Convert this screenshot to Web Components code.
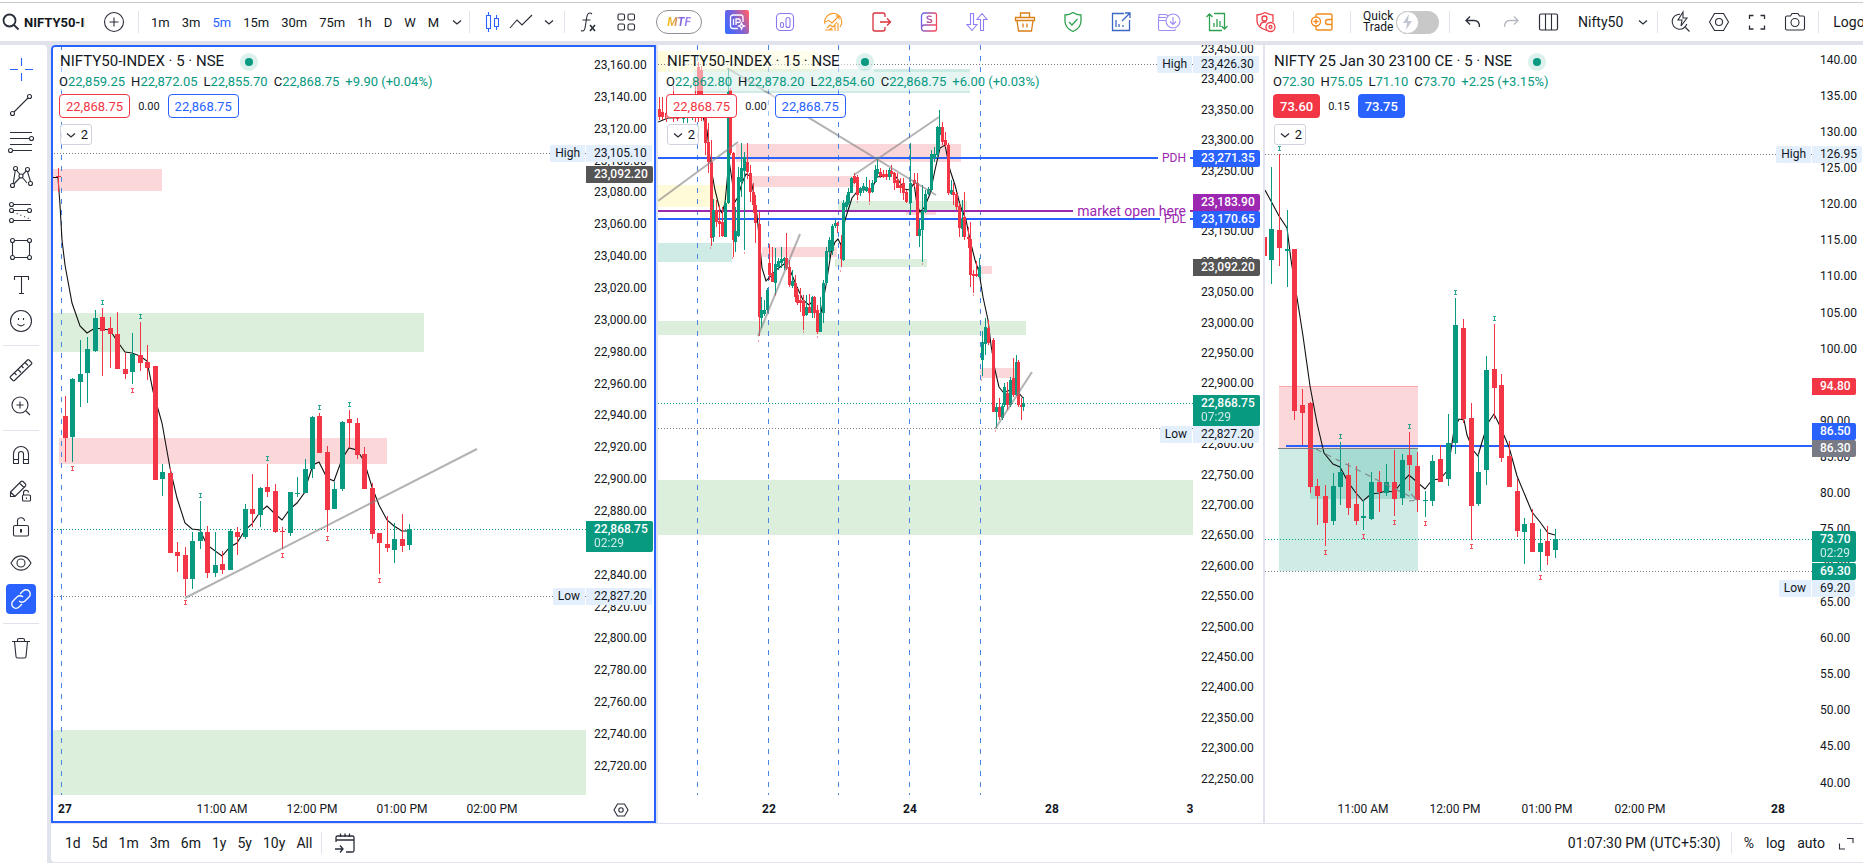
<!DOCTYPE html>
<html lang="en">
<head>
<meta charset="utf-8">
<title>NIFTY50-INDEX charts</title>
<style>
html,body{margin:0;height:100%}
body{font-family:Roboto,"Liberation Sans",sans-serif;font-size:13px;color:#131722;background:#e0e3eb;overflow:hidden}
</style>
</head>
<body>
<chart-app></chart-app>
<script>
/* Shared element base: every element renders its own open shadow root. */
class Base extends HTMLElement{
  connectedCallback(){
    if(this.shadowRoot)return;
    const t=document.createElement('template');
    t.innerHTML='<style>*{box-sizing:border-box}button{font:inherit;color:inherit;background:none;border:0;padding:0;margin:0;display:flex;align-items:center;justify-content:center;white-space:nowrap;flex:none}'+this.css()+'</style>'+this.html();
    this.attachShadow({mode:'open'}).appendChild(t.content.cloneNode(true));
  }
  css(){return ''} html(){return ''}
}

const ICONS={
search:'<circle cx="12.5" cy="12.5" r="6" stroke-width="1.8"/><path d="M17 17l4.5 4.5" stroke-width="1.8"/>',
plus:'<circle cx="14" cy="14" r="9.5"/><path d="M14 9.500v9M9.500 14h9"/>',
chev:'<path d="M10 12.500l4 3.500 4-3.500" stroke-width="1.3"/>',
candles:'<path d="M7.500 7.500h4v13h-4zM9.500 4v3.500M9.500 20.500V24M15.500 10.500h4v8h-4zM17.500 7v3.500M17.500 18.500V22"/>',
line:'<path d="M3 20l7-8 5 5 10-10"/>',
fx:'<path d="M18 6c-2-1.800-4.500-1-5 2l-2 12c-.500 3-2.500 3.500-4 2.500M8.500 12h8"/><path d="M16 17l5 6M21 17l-5 6" stroke-width="1.600"/>',
grid:'<rect x="6" y="6" width="6.500" height="6" rx="1.500"/><rect x="16" y="6" width="6.500" height="6" rx="1.500"/><rect x="6" y="16" width="6.500" height="6" rx="1.500"/><rect x="16" y="16" width="6.500" height="6" rx="1.500"/>',
brand:'<defs><linearGradient id="g" x1="0" y1=".7" x2="1" y2=".2"><stop offset="0" stop-color="#3f6bff"/><stop offset=".5" stop-color="#7a62d8"/><stop offset="1" stop-color="#ff5f6d"/></linearGradient></defs><rect x="2" y="2" width="24" height="24" rx="2" fill="url(#g)" stroke="none"/><g stroke="#fff" stroke-width="1.300"><path d="M20 14V9.500A2.500 2.500 0 0 0 17.500 7H10a2.500 2.500 0 0 0-2.500 2.500V18a2.500 2.500 0 0 0 2.500 2.500h5"/><path d="M10.500 11v6M13 17v-6h2.500a1.500 1.500 0 0 1 0 3.500H13M18.500 15l.800 2 2.200 1-2.200 1-.800 2-.800-2-2.200-1 2.200-1z"/></g>',
bars:'<g stroke="#8b75f0"><rect x="5.500" y="5.500" width="17" height="17" rx="4"/><rect x="9.500" y="14.500" width="3" height="5" rx="1.500"/><rect x="15" y="9.500" width="4" height="10" rx="2"/></g>',
growth:'<g stroke="#f79a28"><path d="M6 16a8.500 8.500 0 1 1 15 3M5 14l5-1.500 3 2.500 7-7M16.500 8H20v3.500M8 20l3-3 3 2 4-5M6 22h8M16 23v-6M19 23v-8M10 22l3-2"/></g>',
exit:'<g stroke="#d8323c" stroke-width="1.300"><path d="M18 9V7a2 2 0 0 0-2-2H8a2 2 0 0 0-2 2v14a2 2 0 0 0 2 2h8a2 2 0 0 0 2-2v-2M13 14h10M20 10.500l3.500 3.500-3.500 3.500"/></g>',
sdoc:'<defs><linearGradient id="s" x1="0" y1="0" x2="1" y2=".3"><stop offset="0" stop-color="#5b63f5"/><stop offset="1" stop-color="#f0485f"/></linearGradient></defs><g stroke="url(#s)" stroke-width="1.300"><path d="M6.500 20V8A3 3 0 0 1 9.500 5h10a2 2 0 0 1 2 2v14a2 2 0 0 1-2 2h-10a3 3 0 0 1 0-6h12M16.500 8.800c-1.500-1.200-4.500-.8-4.500 .9 0 2.200 4.800 1 4.800 3.200 0 1.800-3.200 2-5 .7"/></g>',
updown:'<g stroke="#8f80f2"><path d="M7.500 5.500v11H4l5 6 5-6h-3.500v-11zM17.500 22.500v-11H14l5-6 5 6h-3.500v11z"/></g>',
basket:'<g stroke="#d97f14" stroke-width="1.300"><path d="M4.500 9.500h19v3h-19zM6 12.500l1.500 10.500h13l1.500-10.500M9.500 9.500V5h9v4.500M12 15.500v4M16 15.500v4"/></g>',
shield:'<path d="M14 4.500c2.500 1.800 5 2.500 8 2.500v6c0 5-3.500 8.500-8 10.500-4.500-2-8-5.500-8-10.500V7c3 0 5.500-.7 8-2.500zM10 14l3 3 5.500-6" stroke="#2fa14f" stroke-width="1.300"/>',
expchart:'<g stroke="#3c67c5" stroke-width="1.300"><path d="M17 5.500H5.500v17h17V12M15 13l8-8M18 5h5v5M9 12v7M12 16v3M16 17v2"/></g>',
folder:'<g stroke="#9c8cf5"><path d="M11 9.500H3.500V21A1.500 1.500 0 0 0 5 22.500h14a1.500 1.500 0 0 0 1.500-1.500M3.500 12.500h7.500M4 9.500v-3h7l2 1.500"/><circle cx="18" cy="13" r="7"/><path d="M18 9v7.500M15 13.500l3 3 3-3"/></g>',
gsync:'<g stroke="#2fa14f" stroke-width="1.300"><path d="M6.500 7v15.500H19M3.500 9l3-3 3 3M11 5.500h10.500V20M18.500 18l3 3 3-3M11 19v-4M14 19v-8M17 19v-6"/></g>',
rshield:'<g stroke="#ec3f48" stroke-width="1.300"><path d="M16 22.500c-7-2-10-5-10-9.500V7c3 0 5-1 8-2.500 3 1.500 5 2.500 8 2.500v7"/><circle cx="13.500" cy="10.500" r="2.500"/><path d="M9.500 18c0-3 2-4 4-4h2"/><circle cx="19.500" cy="19" r="4.500"/><circle cx="19.500" cy="19" r="1.500"/></g>',
wallet:'<g stroke="#f08c1e" stroke-width="1.400"><path d="M8 9V7.500A1.500 1.500 0 0 1 9.500 6h13a1.500 1.500 0 0 1 1.500 1.500v13a1.500 1.500 0 0 1-1.500 1.500h-13A1.500 1.500 0 0 1 8 20.500V18M24 11.500h-4a2.500 2.500 0 0 0 0 5h4"/><circle cx="8" cy="13.500" r="4.500"/><path d="M8 11v5M5.500 13.500h5"/></g>',
bolt:'<path d="M15 6l-6 9h4l-1 7 6-9h-4z" fill="#c3c7d2" stroke="none"/>',
undo:'<path d="M11 8.500l-4 4 4 4M7 12.500h8c3.500 0 5.500 2.500 5.500 6.500" stroke-width="1.300"/>',
redo:'<path d="M17 8.500l4 4-4 4M21 12.500h-8c-3.500 0-5.500 2.500-5.500 6.500" stroke="#b6b9c1" stroke-width="1.300"/>',
layout:'<rect x="4.500" y="6" width="18" height="16" rx="1.500" stroke-width="1.200"/><path d="M10.500 6v16M16.500 6v16"/>',
boltlens:'<path d="M13 6.200A7.500 7.500 0 1 0 19.800 16M18.500 19.500l4 4M16 4l-5 8h4l-1 6 6-8h-4z"/>',
hex:'<path d="M9.500 5.500h9l5 8.500-5 8.500h-9L4.500 14z"/><circle cx="14" cy="14" r="3.500"/>',
full:'<path d="M6.500 11V7.500h4M17.500 7.500h4V11M21.500 17.500V21h-4M10.500 21h-4v-3.500" stroke-width="1.300"/>',
camera:'<path d="M4.500 9.500a1.500 1.500 0 0 1 1.500-1.500h3.500l1.500-2.500h6L18.500 8H22a1.500 1.500 0 0 1 1.500 1.500v11A1.500 1.500 0 0 1 22 22H6a1.500 1.500 0 0 1-1.500-1.500z"/><circle cx="14" cy="14.500" r="4"/>',
cross:'<path d="M14.500 3v8M14.500 18v8M3 14.500h8M18 14.500h8" stroke="#2962ff"/>',
trend:'<circle cx="5.500" cy="22.500" r="2"/><circle cx="22.500" cy="5.500" r="2"/><path d="M7 21L21 7"/>',
fib:'<path d="M3 5.500h22M3 11.500h20M3 17.500h22M6 23.500h19"/><circle cx="24.500" cy="11.500" r="2" fill="#fff"/><circle cx="3.500" cy="23.500" r="2" fill="#fff"/>',
pattern:'<path d="M6 22l2.500-16L20 20M6 22L20 7l4 13"/><g fill="#fff"><circle cx="5.500" cy="22.500" r="2"/><circle cx="8.500" cy="5.500" r="2"/><circle cx="14" cy="13" r="2"/><circle cx="20.500" cy="6.500" r="2"/><circle cx="23.500" cy="20.500" r="2"/></g>',
fork:'<path d="M5 5.500h19M5 11.500h17M5 21.500h19"/><path d="M6 13l17 7" stroke-dasharray="1 3"/><g fill="#fff"><circle cx="4.500" cy="5.500" r="2"/><circle cx="4.500" cy="11.500" r="2"/><circle cx="22.500" cy="11.500" r="2"/><circle cx="4.500" cy="21.500" r="2"/></g>',
rect:'<path d="M5.500 5.500h17v17h-17z"/><g fill="#fff"><circle cx="5.500" cy="5.500" r="2"/><circle cx="22.500" cy="5.500" r="2"/><circle cx="5.500" cy="22.500" r="2"/><circle cx="22.500" cy="22.500" r="2"/></g>',
text:'<path d="M7.500 9V5.500h14V9M14.500 5.500v17M12 22.500h5"/>',
smile:'<circle cx="14" cy="14" r="10.500"/><path d="M11.500 11v2M16.500 11v2M10.500 17c2 2.500 5 2.500 7 0"/>',
ruler:'<path d="M3.500 20.500l17-16.500a1 1 0 0 1 1.500 0l2.500 2.500a1 1 0 0 1 0 1.500l-17 16.500a1 1 0 0 1-1.500 0L3.500 22a1 1 0 0 1 0-1.500zM7.500 17l2 2M11 13.500l3 3M14.500 10l2 2M18 6.500l3 3"/>',
zoom:'<circle cx="13" cy="13" r="8"/><path d="M13 9.500v7M9.500 13h7M19 19l4 4"/>',
magnet:'<path d="M6.500 22.500V13a7.500 7.500 0 0 1 15 0v9.500h-5V13a2.500 2.500 0 0 0-5 0v9.500zM6.500 18.500h5M16.500 18.500h5"/>',
pencil:'<path d="M3.500 15L14 4.500a1.500 1.500 0 0 1 2 0L18.500 7a1.500 1.500 0 0 1 0 2L8 19.500H3.500zM12.500 6l4.500 4.500M3.500 15l4.500 4.500"/><rect x="15.500" y="18" width="8" height="6" rx="1" fill="#fff"/><path d="M16.500 18v-2a2.500 2.500 0 0 1 5-.5M19.500 20.500v1.500"/>',
lock:'<rect x="6.500" y="12.500" width="15" height="10.500" rx="1.500"/><path d="M10.500 12.500V8.500a3.500 3.500 0 0 1 7-.5" /><path d="M14 16v3.500" stroke-width="2"/>',
eye:'<path d="M4 14c5-9.500 15-9.500 20 0-5 9.500-15 9.500-20 0z"/><circle cx="14" cy="14" r="4"/>',
link:'<g stroke="#fff" stroke-width="1.300"><path d="M13 9l3-3a4.200 4.200 0 0 1 6 6l-4 4a4.200 4.200 0 0 1-6 0M15 19l-3 3a4.200 4.200 0 0 1-6-6l4-4a4.200 4.200 0 0 1 6 0"/></g>',
trash:'<path d="M5 7.500h18M7.500 7.500l1.500 15a1.500 1.500 0 0 0 1.500 1.500h7a1.500 1.500 0 0 0 1.500-1.500l1.500-15M10.500 7.500V6A1.500 1.500 0 0 1 12 4.500h4A1.500 1.500 0 0 1 17.500 6v1.500"/>',
cal:'<path d="M5 13V8.500A1.500 1.500 0 0 1 6.500 7h15A1.500 1.500 0 0 1 23 8.500v13a1.500 1.500 0 0 1-1.500 1.500H15M5 11h18M9.500 4.500V8M14 4.500V8M18.500 4.500V8M4 20h8M9 16.500l3 3.500-3 3.500" stroke-width="1.300"/>',
minihex:'<path d="M10.500 8h7l3.500 6-3.500 6h-7l-3.500-6z"/><circle cx="14" cy="14" r="2.200"/>',
maxi:'<path d="M15 9.500h6V14M7.500 14.500V20H13"/>'
};
class ChartIcon extends Base{
  css(){return ':host{display:block;width:28px;height:28px;flex:none}svg{display:block}'}
  html(){return `<svg width="28" height="28" viewBox="0 0 28 28" fill="none" stroke="${this.getAttribute('color')||'#2a2e39'}" stroke-width="1.1" aria-hidden="true">${ICONS[this.getAttribute('name')]}</svg>`}
}
customElements.define('chart-icon',ChartIcon);
const ic=(n,c)=>`<chart-icon name="${n}"${c?` color="${c}"`:''}></chart-icon>`;
const btn=(n,cls='',label=n)=>`<button class="${cls}" aria-label="${label}">${ic(n)}</button>`;

class TopBar extends Base{
  css(){return `:host{display:flex;align-items:center;height:41px;background:#fff;box-shadow:inset 0 2px #fff,inset 0 3px #c9cacd;padding-top:3px;overflow:hidden;flex:none}
  .g{display:flex;align-items:center;flex:none}
  .sep{width:1px;height:22px;background:#e0e3eb;flex:none}
  .sym{font-size:13px;font-weight:700;width:85px;justify-content:flex-start;overflow:hidden}
  .sym chart-icon{margin:0 -1px 0 -3px}
  .w28{width:28px}.w24{width:24px}.w38{width:38px}.w48{width:48px}.w46{width:46px}.w30{width:30px}.w56{width:56px}
  .add{margin:0 10px 0 15px}
  .iv{gap:12px;padding:0 6px 0 12px;font-size:13px}
  .on{color:#2962ff}
  .ty{padding:0 1px 0 9px}.st{padding:0 4px}
  .mtf{width:46px;height:24px;border:1px solid #8d8f96;border-radius:12px;margin:0 11px;font-size:12px;font-weight:700;font-style:italic}
  .mtf span{background:linear-gradient(90deg,#f5c518,#e0a050 35%,#7b62e8 60%,#b79bf0);-webkit-background-clip:text;color:transparent}
  .qt{padding:0 10px 0 12px;gap:5px}
  .qt label{display:flex;align-items:center;gap:5px;font-size:12px;line-height:11px}
  .qt span{width:28px}
  .sw{position:relative;width:43px;height:23px}
  input{appearance:none;margin:0;display:block;width:43px;height:23px;border-radius:12px;background:#c8c8c8}
  .knob{position:absolute;left:0;top:0;width:23px;height:23px;border-radius:50%;background:#fff;border:1px solid #c8c8c8;display:flex;align-items:center;justify-content:center;pointer-events:none}
  .lay{padding-left:6px;font-size:13px}.lay chart-icon{margin-left:6px}
  .lay{font-size:14px}.out{padding-left:14px;font-size:14px}`}
  html(){
    const iv=['1m','3m','5m','15m','30m','75m','1h','D','W','M'].map(t=>`<button${t==='5m'?' class="on"':''}>${t}</button>`).join('');
    const tools=['brand','bars','growth','exit','sdoc','updown','basket','shield','expchart','folder','gsync','rshield'].map(n=>btn(n,'w48')).join('');
    const sep='<i class="sep"></i>';
    return `<button class="sym">${ic('search')}NIFTY50-INDEX</button>${btn('plus','w28 add')}${sep}
    <div class="g iv">${iv}</div>${btn('chev','w24')}${sep}
    <div class="g ty"><button class="w28" aria-label="candles">${ic('candles','#2962ff')}</button>${btn('line','w28')}${btn('chev','w28')}</div>${sep}
    <div class="g st">${btn('fx','w38')}${btn('grid','w38')}<button class="mtf"><span>MTF</span></button>${tools}</div>${sep}
    ${btn('wallet','w56')}${sep}
    <div class="g qt"><label for="qt"><span>Quick Trade</span></label><div class="sw"><input type="checkbox" id="qt"><div class="knob">${ic('bolt')}</div></div></div>${sep}
    <div class="g">${btn('undo','w46')}${btn('redo','w30')}${btn('layout','w46')}<button class="lay">Nifty50${ic('chev')}</button></div>${sep}
    <div class="g st">${btn('boltlens','w38')}${btn('hex','w38')}${btn('full','w38')}${btn('camera','w38')}</div>${sep}
    <button class="out">Logout</button>`}
}
customElements.define('top-bar',TopBar);

class ToolRail extends Base{
  css(){return `:host{display:flex;flex-direction:column;width:47px;background:#fff;border-radius:0 4px 0 0;padding-top:6px;flex:none}
  button{width:42px;height:36px}
  hr{width:36px;height:1px;background:#e0e3eb;border:0;margin:6px 0 6px 3px;flex:none}
  .on::before{content:"";position:absolute;width:30px;height:30px;border-radius:4px;background:#2962ff}
  .on chart-icon{position:relative}`}
  html(){return ['cross','trend','fib','pattern','fork','rect','text','smile',0,'ruler','zoom',0,'magnet','pencil','lock','eye','link',0,'trash'].map(n=>n?btn(n,n==='link'?'on':''):'<hr>').join('')}
}
customElements.define('tool-rail',ToolRail);

/* Candles: x, high, body top, body bottom, low, 1 = rising / 0 = falling. */
const R='#f23645',G='#089981',PINK='rgba(242,54,69,.2)',GREEN='rgba(76,175,80,.2)',TEAL='rgba(8,153,129,.2)',YEL='rgba(255,235,59,.2)';
const CHARTS={
a:{x0:51,scale:[23160,65,-20,31.86,22],fmt:1,body:5,
 title:'NIFTY50-INDEX · 5 · NSE',ohlc:['22,859.25','22,872.05','22,855.70','22,868.75','+9.90 (+0.04%)'],bid:'22,868.75',ask:'22,868.75',spread:'0.00',
 zones:[[51,169,111,22,PINK],[51,313,373,39,GREEN],[59,438,328,26,PINK],[51,730,2000,65,GREEN]],
 days:[61.5],dots:[[153.5,'#787b86'],[529.5,G],[596.5,'#787b86']],trends:[[185,598,477,449]],
 ma:'51,177.5 58,177.5 60,205 62,240 65,265 72,303 80,326 87,333 95,328 102,329 110,330 117,341 125,352 132,353 140,356 147,361 153,391 158,409 162,423 170,468 177,498 185,523 192,529 200,530 207,545 222,556 230,547 237,543 245,530 252,524 260,512 267,506 275,514 282,520 290,509 297,503 305,492 308,480 313,465 319,462 327,478 334,481 342,459 349,448 357,450 364,461 372,487 379,505 387,520 394,526 402,531 409,531',
 c:[[58,168,176,177,192,0],[65,396,416,438,462,0],[72,378,379,437,462,1],[80,340,374,382,407,1],[87,337,349,373,403,1],[95,310,318,351,352,1],[102,308,317,331,376,0],[110,317,328,334,368,0],[117,312,334,369,369,0],[125,353,369,374,379,0],[132,333,354,372,384,1],[140,322,355,363,371,0],[147,345,362,368,380,0],[155,366,366,480,480,0],[162,464,472,479,496,1],[170,468,473,553,553,0],[177,542,552,556,572,0],[185,547,555,579,596,0],[192,532,541,579,589,1],[200,501,532,541,549,1],[207,526,532,573,578,0],[215,532,565,573,577,1],[222,551,564,570,574,0],[230,529,531,570,570,1],[237,527,532,537,555,0],[245,504,509,537,539,1],[252,474,509,514,527,0],[260,487,488,515,527,1],[267,464,487,492,497,0],[275,484,491,532,533,0],[282,527,531,532,549,0],[290,492,492,533,536,1],[297,477,493,494,497,1],[305,459,469,493,493,1],[312,416,417,469,478,1],[319,413,416,453,453,0],[327,446,452,510,532,0],[334,482,489,509,509,1],[342,421,422,489,491,1],[349,410,419,423,448,0],[357,418,423,455,459,0],[364,447,454,489,489,0],[372,483,488,534,539,0],[379,533,533,543,574,0],[387,516,544,548,552,0],[394,523,539,550,563,1],[402,514,539,546,552,0],[409,524,529,545,550,1]],
 up:[[102,302],[140,316],[200,495],[267,458],[319,407],[349,404]],dn:[[72,468],[132,390],[185,602],[282,555],[327,538],[379,580]],
 tags:[[153,'23,105.10','soft','High'],[174,'23,092.20','dark'],[529,'22,868.75','teal','','02:29'],[596,'22,827.20','soft','Low']],
 times:[[65,'27',1],[222,'11:00 AM'],[312,'12:00 PM'],[402,'01:00 PM'],[492,'02:00 PM']]},
b:{x0:658,scale:[23450,49,-50,30.4,24],fmt:1,body:3,
 title:'NIFTY50-INDEX · 15 · NSE',ohlc:['22,862.80','22,878.20','22,854.60','22,868.75','+6.00 (+0.03%)'],bid:'22,868.75',ask:'22,868.75',spread:'0.00',
 zones:[[658,51,159,21,YEL],[694,69,276,24,TEAL],[736,144,225,18,PINK],[750,176,105,11,PINK],[658,185,72,22,YEL],[838,201,129,10,GREEN],[906,211,30,4,PINK],[658,243,74,19,TEAL],[762,247,75,10,PINK],[835,259,92,8,GREEN],[980,266,12,8,PINK],[658,321,368,14,GREEN],[980,368,40,10,PINK],[658,480,2000,55,GREEN]],
 days:[697.5,768.5,838.5,909.5,980.5],dots:[[64.5,'#787b86'],[403.5,G],[428.5,'#787b86']],
 levels:[[658,158,'#2962ff'],[658,211,'#9c27b0'],[658,219,'#2962ff']],
 trends:[[658,201,738,142],[727,68,936,195],[854,175,939,117],[758,336,800,234],[995,429,1032,372]],
 ma:'658,122 668,118 703,117 707,130 711,168 715,190 720,210 722,213 725,203 729,160 732,180 735,202 738,197 742,183 746,174 750,176 753,190 757,215 762,268 766,281 770,277 776,270 784,264 790,270 797,287 803,300 809,305 813,301 817,315 821,313 826,285 831,253 835,242 838,239 841,245 845,220 852,198 856,193 862,190 872,189 877,177 885,176 893,173 899,181 904,189 910,190 914,183 917,205 920,212 924,208 930,194 935,170 940,148 945,145 950,170 955,185 960,205 966,220 970,240 975,260 979,272 983,297 988,320 991,345 995,370 999,387 1003,392 1008,391 1013,388 1018,392 1023,398',
 c:[[659,97,109,117,120,0],[662,97,112,117,120,0],[666,110,113,118,122,0],[673,86,111,116,122,0],[677,105,113,119,121,0],[683,108,115,119,123,1],[687,110,114,118,123,1],[692,112,115,118,120,1],[695,80,112,118,122,0],[698,62,67,118,122,0],[701,66,70,118,121,0],[705,107,115,143,155,0],[708,123,142,162,173,0],[711,140,162,238,246,0],[713,199,210,237,242,1],[716,200,210,222,227,0],[719,205,221,224,237,0],[722,207,222,236,237,0],[725,200,203,237,237,1],[728,68,92,203,204,1],[730,88,90,153,155,0],[733,152,153,240,257,0],[735,207,231,242,252,1],[738,167,177,236,237,1],[741,143,168,182,197,1],[744,152,157,171,250,1],[747,143,162,172,179,0],[750,165,173,192,202,0],[753,183,192,205,213,0],[755,195,205,223,243,0],[759,212,224,317,336,0],[761,297,310,318,328,1],[764,300,310,314,316,1],[767,288,290,310,313,1],[769,244,263,275,280,0],[772,247,273,282,282,0],[775,248,264,283,295,1],[778,258,261,267,270,1],[781,247,259,263,268,1],[784,257,258,261,270,1],[786,233,258,268,270,0],[789,260,267,285,287,0],[792,270,281,286,288,1],[795,275,283,297,302,0],[797,288,295,303,305,0],[800,288,300,303,312,0],[803,295,301,316,330,0],[806,295,307,315,316,1],[809,294,307,313,313,0],[812,296,297,313,318,1],[814,296,297,313,318,0],[817,305,310,332,334,0],[820,297,313,332,332,1],[823,280,283,313,323,1],[826,247,251,283,285,1],[829,237,240,252,260,1],[832,224,226,251,255,1],[835,220,223,226,228,1],[837,222,223,225,233,0],[841,235,245,259,267,0],[843,200,203,260,261,1],[846,195,202,207,210,1],[848,188,192,203,205,1],[851,177,178,193,193,1],[854,173,176,183,184,0],[857,175,177,195,200,0],[860,187,188,193,196,1],[863,183,186,189,193,1],[866,177,187,191,192,1],[869,180,188,193,202,0],[872,180,183,192,193,1],[875,165,170,182,183,1],[877,157,169,174,177,1],[880,168,172,176,178,0],[883,170,174,177,178,0],[886,170,174,177,180,0],[889,168,170,177,180,1],[891,165,171,174,177,0],[894,172,173,183,190,0],[897,173,180,188,188,0],[900,178,185,188,193,0],[903,178,183,193,200,0],[906,190,192,202,203,0],[910,143,183,203,215,1],[914,173,180,184,187,0],[917,173,183,236,236,0],[919,220,229,236,247,1],[922,185,211,230,262,1],[925,190,194,212,213,1],[928,187,189,194,195,1],[931,150,154,190,192,1],[934,147,154,158,162,1],[937,126,127,155,158,1],[939,110,127,135,150,1],[942,122,127,142,145,0],[945,132,140,145,147,0],[948,143,145,193,195,0],[951,180,190,194,195,1],[953,183,192,195,205,0],[956,192,194,207,210,0],[959,203,206,228,237,0],[962,200,219,229,237,1],[964,192,217,237,240,0],[968,227,237,239,248,0],[970,222,239,275,287,0],[973,270,274,276,293,0],[976,261,274,276,277,0],[979,258,267,277,277,1],[982,331,342,360,376,1],[985,318,327,344,355,1],[988,320,328,343,345,0],[993,338,340,412,412,0],[996,403,407,412,428,1],[999,398,407,417,420,0],[1002,403,406,418,420,1],[1004,383,387,405,407,1],[1007,382,393,405,410,0],[1010,377,380,405,407,1],[1013,358,378,395,397,0],[1016,355,362,395,396,1],[1018,360,362,405,407,0],[1021,398,405,407,420,0],[1023,397,403,407,411,1]],
 faint:[[710,247],[732,257],[744,252],[758,340],[775,294],[803,331],[817,336],[840,270],[857,201],[869,203],[922,263],[973,294],[981,379],[995,430]],up:[],dn:[],
 tags:[[64,'23,426.30','soft','High'],[158,'23,271.35','blue'],[202,'23,183.90','purple'],[219,'23,170.65','blue'],[267,'23,092.20','dark'],[403,'22,868.75','teal','','07:29'],[434,'22,827.20','soft','Low']],
 notes:[[158,'PDH'],[211,'market open here',1],[219,'PDL']],
 times:[[769,'22',1],[910,'24',1],[1052,'28',1],[1190,'3',1]]},
c:{x0:1265,scale:[140,59.5,-5,36.15,20],fmt:0,body:5,
 title:'NIFTY 25 Jan 30 23100 CE · 5 · NSE',ohlc:['72.30','75.05','71.10','73.70','+2.25 (+3.15%)'],bid:'73.60',ask:'73.75',spread:'0.15',solid:1,
 zones:[[1279,386,139,62,PINK],[1279,386,139,1,'rgba(242,54,69,.3)'],[1279,448,139,123,TEAL],[1310,448,108,51,TEAL]],
 days:[],dots:[[154.5,'#787b86'],[539.5,G],[571.5,'#787b86']],levels:[[1286,446,'#2962ff']],trends:[],
 ma:'1265,190 1271,201 1279,216 1287,228 1291,260 1298,304 1303,336 1310,386 1317,423 1324,453 1333,464 1340,467 1348,482 1356,493 1363,501 1371,494 1379,493 1386,491 1394,492 1402,482 1409,475 1417,482 1425,489 1432,480 1440,479 1448,470 1451,450 1454,430 1459,419 1464,420 1467,435 1473,450 1478,456 1482,442 1488,423 1494,414 1499,424 1509,447 1517,476 1532,512 1540,522 1548,533 1555,535',
 c:[[1264,237,237,256,256,0],[1271,167,229,260,284,1],[1279,154,230,248,266,0],[1287,210,249,251,287,1],[1294,249,249,411,420,0],[1302,389,405,413,445,0],[1310,402,403,487,493,0],[1317,479,486,496,525,0],[1325,485,496,523,546,0],[1333,473,486,521,525,1],[1340,442,472,487,505,1],[1348,463,475,508,515,0],[1356,466,504,521,525,0],[1363,500,516,518,530,1],[1371,472,482,519,520,1],[1379,471,482,492,512,0],[1386,464,482,493,496,1],[1394,450,482,499,516,0],[1402,454,460,498,505,1],[1409,432,455,465,491,0],[1417,452,466,500,512,0],[1425,491,500,501,517,1],[1432,455,461,501,506,1],[1440,445,459,482,482,0],[1448,414,443,479,486,1],[1455,298,325,443,454,1],[1463,319,328,419,423,0],[1471,403,418,506,540,0],[1478,454,472,504,506,1],[1486,356,370,470,485,1],[1494,324,369,388,419,0],[1501,374,385,458,462,0],[1509,441,456,487,487,0],[1517,479,491,531,537,0],[1524,518,524,532,564,1],[1532,509,523,552,552,0],[1540,529,543,552,571,1],[1547,526,541,556,565,0],[1555,529,539,550,558,1]],
 up:[[1279,148],[1340,436],[1409,426],[1455,292],[1494,318]],dn:[[1325,552],[1363,536],[1394,522],[1425,523],[1471,546],[1540,577]],
 extra:'<path d="M1278 448.500h140" stroke="#787b86"/><path d="M1316 449l101 51m-6-6l6 6-8 1" stroke="#7d8c8c" stroke-dasharray="6 5" stroke-width="1.2" fill="none"/>',
 tags:[[154,'126.95','soft','High'],[386,'94.80','red'],[431,'86.50','blue'],[448,'86.30','gray'],[539,'73.70','teal','','02:29'],[571,'69.30','teal'],[588,'69.20','soft','Low']],
 times:[[1363,'11:00 AM'],[1455,'12:00 PM'],[1547,'01:00 PM'],[1640,'02:00 PM'],[1778,'28',1]]}
};
const TOP=45;
const mark=(x,y,c)=>`<path d="M${x-1} ${y-1.5}h3M${x-1} ${y+2.5}h3M${x+.5} ${y-1}v4" stroke="${c}" opacity=".85"/>`;

/* The plotting area: zones, day breaks, candles, moving average and drawings. */
class PricePlot extends Base{
  css(){return ':host{display:block;overflow:hidden;min-width:0;min-height:0}svg{display:block;width:100%;height:100%}'}
  html(){
    const d=CHARTS[this.getAttribute('chart')];
    const h=(d.body-1)/2;
    return `<svg aria-label="${d.title}"><g transform="translate(${-d.x0} ${-TOP})">
    ${d.zones.map(z=>`<rect x="${z[0]}" y="${z[1]}" width="${z[2]}" height="${z[3]}" fill="${z[4]}"/>`).join('')}
    ${d.days.map(x=>`<path d="M${x} 45V795" stroke="#4a86e0" stroke-dasharray="5 6"/>`).join('')}
    ${d.dots.map(v=>`<path d="M${d.x0} ${v[0]}H3000" stroke="${v[1]}" stroke-dasharray="1 2"/>`).join('')}
    ${(d.levels||[]).map(v=>`<path d="M${v[0]} ${v[1]}H3000" stroke="${v[2]}" stroke-width="2"/>`).join('')}
    <polyline points="${d.ma}" fill="none" stroke="#111" stroke-width="1.1"/>
    ${d.c.map(c=>{const f=c[5]?G:R;return `<rect x="${c[0]}" y="${c[1]}" width="1" height="${Math.max(1,c[4]-c[1])}" fill="${f}"/><rect x="${c[0]-h}" y="${c[2]}" width="${d.body}" height="${Math.max(1,c[3]-c[2])}" fill="${f}"/>`}).join('')}
    ${d.trends.map(t=>`<path d="M${t[0]} ${t[1]}L${t[2]} ${t[3]}" stroke="#808080" stroke-opacity=".6" stroke-width="2"/>`).join('')}
    ${d.extra||''}${d.up.map(m=>mark(m[0],m[1],G)).join('')}${d.dn.map(m=>mark(m[0],m[1],R)).join('')}
    ${(d.faint||[]).map(m=>`<rect x="${m[0]}" y="${m[1]}" width="1" height="2" fill="${R}" opacity=".5"/>`).join('')}
    </g></svg>`}
}
customElements.define('price-plot',PricePlot);

class PriceAxis extends Base{
  css(){return `:host{display:block;position:relative;font-size:12px;min-height:0}
  svg{display:block;width:100%;height:100%;fill:#131722}
  .tag,.name{position:absolute;height:17px;line-height:17px}
  .tag{left:0;padding:0 5px 0 8px;border-radius:0 2px 2px 0;color:#fff;font-weight:500}
  .tall{height:31px;line-height:14px;padding-top:1px}.tall span{display:block;font-weight:400;opacity:.8}
  .soft{background:#e3effd;color:#131722;font-weight:400}.dark{background:#555}.teal{background:#089981}.blue{background:#2962ff}.purple{background:#9c27b0}.red{background:#f23645}.gray{background:#787b86}
  .name{right:100%;margin-right:1px;padding:0 5px;background:#e3effd;border-radius:2px 0 0 2px}
  .note{position:absolute;right:100%;margin-right:3px;padding:0 4px;height:16px;line-height:16px;color:#9c27b0;white-space:nowrap}
  .note::before{content:"";position:absolute;z-index:-1;inset:6px 0;background:#fff}.note{z-index:0}
  .big{font-size:14px}`}
  html(){
    const d=CHARTS[this.getAttribute('chart')],s=d.scale,out=[];
    for(let i=0;i<=s[4];i++){
      const v=s[0]+s[2]*i;
      const t=v.toLocaleString('en-US',{minimumFractionDigits:2});
      out.push(`<text x="8" y="${Math.round(s[1]+s[3]*i-TOP)+4}">${t}</text>`);
    }
    return `<svg>${out.join('')}</svg>${(d.notes||[]).map(n=>`<div class="note${n[2]?' big':''}" style="top:${n[0]-TOP-8}px">${n[1]}</div>`).join('')}
    ${d.tags.map(t=>`<div class="tag ${t[2]}${t[4]?' tall':''}" style="top:${t[0]-TOP-8}px">${t[1]}${t[4]?`<span>${t[4]}</span>`:''}</div>${t[3]?`<div class="name" style="top:${t[0]-TOP-8}px">${t[3]}</div>`:''}`).join('')}`}
}
customElements.define('price-axis',PriceAxis);

class TimeAxis extends Base{
  css(){return ':host{display:block;font-size:12px;min-width:0;overflow:hidden}svg{display:block;width:100%;height:28px;fill:#131722;text-anchor:middle}.b{font-weight:700}'}
  html(){const d=CHARTS[this.getAttribute('chart')];return `<svg>${d.times.map(t=>`<text x="${t[0]-d.x0}" y="18"${t[2]?' class="b"':''}>${t[1]}</text>`).join('')}</svg>`}
}
customElements.define('time-axis',TimeAxis);

class ChartLegend extends Base{
  css(){return `:host{position:absolute;left:8px;top:6px;display:flex;flex-direction:column;align-items:flex-start}
  .row{display:flex;align-items:center;background:rgba(255,255,255,.5);white-space:nowrap}
  h2{margin:0;font-size:15px;font-weight:400;line-height:21px;padding-left:1px}
  .dot{width:18px;height:18px;border-radius:50%;background:rgba(8,153,129,.14);display:flex;align-items:center;justify-content:center;margin:0 0 0 16px}
  .dot::before{content:"";width:8px;height:8px;border-radius:50%;background:#089981}
  .o{height:19px;gap:6px;font-size:13px}.o b{font-weight:400;color:#089981}
  .q{height:24px;margin-top:3px;gap:8px;font-size:11px}
  .q button{height:24px;padding:0 6px;border-radius:4px;border:1px solid;background:#fff;font-size:13px}
  .sell{color:#f23645}.buy{color:#2962ff}
  .q .solid{color:#fff;border:0;padding:0 7px;font-weight:500}.sell.solid{background:#f23645}.buy.solid{background:#2962ff}
  .n{margin:6px 0 0 1px;width:32px;height:21px;border:1px solid #d1d4dc;border-radius:3px;background:rgba(255,255,255,.8);font-size:13px}
  .n chart-icon{margin:0 -4px 0 -7px}`}
  html(){
    const d=CHARTS[this.getAttribute('chart')],s=d.solid?' solid':'',o=d.ohlc;
    return `<div class="row"><h2>${d.title}</h2><span class="dot"></span></div>
    <div class="row o">${['O','H','L','C'].map((k,i)=>`<span>${k}<b>${o[i]}</b></span>`).join('')}<b>${o[4]}</b></div>
    <div class="row q"><button class="sell${s}">${d.bid}</button><span>${d.spread}</span><button class="buy${s}">${d.ask}</button></div>
    <button class="n">${ic('chev')}2</button>`}
}
customElements.define('chart-legend',ChartLegend);

class ChartPanel extends Base{
  css(){return `:host{position:relative;display:grid;grid-template-columns:minmax(0,1fr) var(--axis,70px);grid-template-rows:minmax(0,1fr) 28px;background:#fff;min-width:0;min-height:0;overflow:hidden}
  :host([active])::after{content:"";position:absolute;inset:0;border:2px solid #2962ff;border-radius:4px 0 0 0;pointer-events:none}
  :host([active]){border-radius:4px 0 0 0}
  .cog{height:28px}.cog chart-icon{margin-top:1px}`}
  html(){const k=this.getAttribute('chart');return `<price-plot chart="${k}"></price-plot><price-axis chart="${k}"></price-axis><time-axis chart="${k}"></time-axis>${k==='a'?btn('minihex','cog','settings'):''}<chart-legend chart="${k}"></chart-legend>`}
}
customElements.define('chart-panel',ChartPanel);

class BottomBar extends Base{
  css(){return `:host{display:flex;align-items:center;height:39px;margin-bottom:1px;background:#fff;border-top:1px solid #e0e3eb;border-radius:0 0 0 4px;padding:0 3px 0 14px;font-size:14px;flex:none}
  .r{display:flex;gap:11px;padding-right:9px}.sep{width:1px;height:22px;background:#e0e3eb}
  .cal{margin-left:9px}.sp{flex:1}.clock{padding-right:10px}.m{display:flex;gap:12px;padding:0 7px 0 12px}`}
  html(){return `<div class="r">${['1d','5d','1m','3m','6m','1y','5y','10y','All'].map(t=>`<button>${t}</button>`).join('')}</div><i class="sep"></i>${btn('cal','cal','go to date')}<div class="sp"></div><button class="clock">01:07:30 PM (UTC+5:30)</button><i class="sep"></i><div class="m"><button>%</button><button>log</button><button>auto</button></div>${btn('maxi','','maximise')}`}
}
customElements.define('bottom-bar',BottomBar);

class ChartApp extends Base{
  css(){return `:host{display:flex;flex-direction:column;height:100vh;background:#e0e3eb}
  .body{flex:1;display:flex;gap:4px;padding-top:4px;min-height:0}
  main{flex:1;display:flex;flex-direction:column;min-width:0}
  .charts{flex:1;display:grid;grid-template-columns:605fr 605fr 598fr;gap:2px;min-height:0}
  .last{--axis:51px}`}
  html(){return `<top-bar></top-bar><div class="body"><tool-rail></tool-rail><main><div class="charts"><chart-panel chart="a" active></chart-panel><chart-panel chart="b"></chart-panel><chart-panel chart="c" class="last"></chart-panel></div><bottom-bar></bottom-bar></main></div>`}
}
customElements.define('chart-app',ChartApp);
</script>
</body>
</html>
